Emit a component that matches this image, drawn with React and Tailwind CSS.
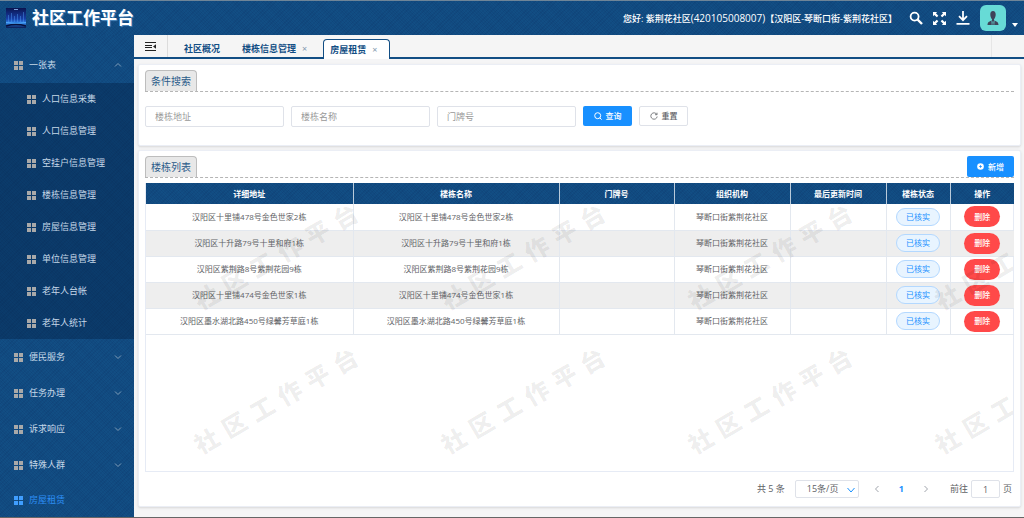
import { useState } from "react";

const openItems = [
  "人口信息采集",
  "人口信息管理",
  "空挂户信息管理",
  "楼栋信息管理",
  "房屋信息管理",
  "单位信息管理",
  "老年人台帐",
  "老年人统计",
];

const closedGroups = ["便民服务", "任务办理", "诉求响应", "特殊人群"];

const columns = [
  { title: "详细地址", width: "w-[207px]" },
  { title: "楼栋名称", width: "w-[206px]" },
  { title: "门牌号", width: "w-[115px]" },
  { title: "组织机构", width: "w-[116px]" },
  { title: "最后更新时间", width: "w-24" },
  { title: "楼栋状态", width: "w-16" },
  { title: "操作", width: "w-16" },
];

const rows = [
  "汉阳区十里铺478号金色世家2栋",
  "汉阳区十升路79号十里和府1栋",
  "汉阳区紫荆路8号紫荆花园9栋",
  "汉阳区十里铺474号金色世家1栋",
  "汉阳区墨水湖北路450号绿馨芳草庭1栋",
];

const weave =
  "bg-[repeating-linear-gradient(45deg,rgba(0,20,70,0.08)_0,rgba(0,20,70,0.08)_1px,transparent_1px,transparent_2px),repeating-linear-gradient(-45deg,rgba(0,20,70,0.08)_0,rgba(0,20,70,0.08)_1px,transparent_1px,transparent_3px)]";

function GridIcon({ className }) {
  return (
    <svg viewBox="0 0 9 9" className={`size-[9px] shrink-0 ${className}`} fill="currentColor">
      <path d="M0 0h4v4H0zM5 0h4v4H5zM0 5h4v4H0zM5 5h4v4H5z" />
    </svg>
  );
}

function Chevron({ className, d }) {
  return (
    <svg viewBox="0 0 8 8" className={className} fill="none" stroke="currentColor">
      <path d={d} />
    </svg>
  );
}

function Logo() {
  return (
    <svg viewBox="0 0 20 20" className="size-5 shrink-0">
      <defs>
        <linearGradient id="logo-sky" x1="0" y1="0" x2="0" y2="1">
          <stop offset="0" stopColor="#0b1450" />
          <stop offset="0.55" stopColor="#1740a8" />
          <stop offset="0.75" stopColor="#2f83e6" />
          <stop offset="1" stopColor="#0a1a52" />
        </linearGradient>
      </defs>
      <rect width="20" height="20" fill="url(#logo-sky)" />
      <path
        d="M2.500 7v7M5.500 5v9M8.500 8v6M11.500 6v8M14.500 8v6M17.500 4v10"
        stroke="#4f9cf5"
        strokeOpacity="0.45"
      />
      <path d="M8 1.500h4" stroke="#9cc4ff" strokeOpacity="0.8" />
      <path d="M0 14.500q10 2 20 0" stroke="#58b4ff" strokeOpacity="0.8" fill="none" />
      <path d="M0 18q10-3 20 0" stroke="#07103c" strokeWidth="1.500" fill="none" />
    </svg>
  );
}

function Header() {
  return (
    <header
      className={`flex h-[35px] shrink-0 items-center border-t border-[#6f8598] bg-[#124e84] px-1.5 text-white ${weave}`}
    >
      <Logo />
      <h1 className="ml-1.5 text-[17px] leading-5 font-bold [text-shadow:1px_1px_1px_rgba(120,180,230,0.6)]">
        社区工作平台
      </h1>
      <p className="ml-auto text-[9px] leading-4 font-medium">
        您好: 紫荆花社区<span className="text-[10px]">(420105008007)</span>【汉阳区-琴断口街-紫荆花社区】
      </p>
      <div className="ml-3 flex items-center gap-2">
        <button type="button" aria-label="搜索">
          <svg viewBox="0 0 14 14" className="size-3.5" fill="none" stroke="currentColor" strokeWidth="1.800">
            <circle cx="5.600" cy="5.600" r="4" />
            <path d="M8.500 8.500l4.500 4.500" strokeWidth="2.400" />
          </svg>
        </button>
        <button type="button" aria-label="全屏" className="px-0.5">
          <svg viewBox="0 0 13 13" className="size-[13px]" fill="currentColor">
            <path d="M0 0h4.200L2.900 1.300 5.300 3.800 3.800 5.300 1.300 2.900 0 4.200zM13 0v4.200l-1.300-1.300-2.500 2.400-1.500-1.500 2.400-2.500L8.800 0zM0 13V8.800l1.300 1.300 2.500-2.400 1.500 1.500-2.400 2.500L4.200 13zM13 13H8.800l1.300-1.300-2.400-2.500 1.500-1.500 2.500 2.400L13 8.800z" />
          </svg>
        </button>
        <button type="button" aria-label="下载">
          <svg viewBox="0 0 14 14" className="size-3.5" fill="none" stroke="currentColor" strokeWidth="1.800">
            <path d="M7 0v9M3 5.200l4 4 4-4M.5 12.800h13" />
          </svg>
        </button>
        <button type="button" aria-label="用户菜单" className="ml-0.5 flex items-end gap-1.5">
          <span className="grid size-[26px] place-items-center rounded-md bg-[#67dbd6]">
            <svg viewBox="0 0 14 16" className="h-4 w-3.5">
              <path
                d="M7 1c1.800 0 2.700 1.400 2.700 3.400S8.800 8.200 8 9.200v1.300c2 .8 4.500 1.200 4.500 4.500h-11c0-3.300 2.500-3.700 4.500-4.500V9.200C5.200 8.200 4.300 6.400 4.300 4.400S5.200 1 7 1z"
                fill="#3f4459"
              />
              <path d="M5.500 10.800L7 12l1.500-1.200L8.200 15H5.800z" fill="#67dbd6" />
              <path d="M6.600 11.800h.8l.4 3.200H6.200z" fill="#3f4459" />
            </svg>
          </span>
          <svg viewBox="0 0 6 4" className="mb-1 h-1 w-1.5" fill="currentColor">
            <path d="M0 0h6L3 4z" />
          </svg>
        </button>
      </div>
    </header>
  );
}

function Sidebar() {
  return (
    <nav className={`w-[134px] shrink-0 bg-[#124e84] pt-3 text-[9px] leading-4 text-[#c6d8e8] ${weave}`}>
      <button type="button" className="flex h-9 w-full items-center pr-3 pl-3.5">
        <GridIcon className="text-[#a9a9a9]" />
        <span className="ml-1.5">一张表</span>
        <Chevron className="ml-auto size-2 text-[#7f9db8]" d="M1 5.500l3-3 3 3" />
      </button>
      <ul className="bg-[#001a3c]/35">
        {openItems.map((item) => (
          <li key={item}>
            <a href="#" className="flex h-8 items-center pl-[27px]">
              <GridIcon className="text-[#a9a9a9]" />
              <span className="ml-1.5">{item}</span>
            </a>
          </li>
        ))}
      </ul>
      {closedGroups.map((group) => (
        <button key={group} type="button" className="flex h-9 w-full items-center pr-3 pl-3.5">
          <GridIcon className="text-[#a9a9a9]" />
          <span className="ml-1.5">{group}</span>
          <Chevron className="ml-auto size-2 text-[#7f9db8]" d="M1 2.500l3 3 3-3" />
        </button>
      ))}
      <a href="#" className="flex h-[34px] items-center pl-3.5 text-[#2d8ff5]">
        <GridIcon className="text-[#409eff]" />
        <span className="ml-1.5">房屋租赁</span>
      </a>
    </nav>
  );
}

function TabBar() {
  return (
    <div className="flex h-6 shrink-0 items-end border-b-2 border-[#124e84] bg-[#f5f5f5] text-[9px] leading-4 font-bold text-[#124e84]">
      <button
        type="button"
        aria-label="收起菜单"
        className="grid h-full w-[34px] place-items-center border-r border-[#dcdcdc]"
      >
        <svg viewBox="0 0 11 9" className="h-[9px] w-[11px] text-[#222]" fill="none" stroke="currentColor">
          <path d="M0 .5h11M0 3.500h7M0 5.500h7M0 8.500h11" />
          <path d="M11 2.300v4.400L8 4.500z" fill="currentColor" stroke="none" />
        </svg>
      </button>
      <button type="button" className="ml-4">
        社区概况
      </button>
      <button type="button" className="ml-[22px]">
        楼栋信息管理<span className="ml-1.5 font-normal text-[#8298ad]">×</span>
      </button>
      <button
        type="button"
        className="-mb-0.5 ml-4 h-5 rounded-t border border-b-0 border-[#124e84] bg-white px-1.5"
      >
        房屋租赁<span className="mx-1.5 font-normal text-[#8298ad]">×</span>
      </button>
      <span className="mr-8 ml-auto h-full border-l border-[#e6e6e6]" />
    </div>
  );
}

function SectionTitle({ children }) {
  return (
    <h2 className="rounded-t border border-b-0 border-[#bdbdbd] bg-[#e8e8e8] px-[5px] text-[10px] leading-5 text-[#2a5a88]">
      {children}
    </h2>
  );
}

function SearchPanel() {
  return (
    <section className="rounded-xs border border-[#ebeef5] bg-white px-1.5 pt-[5px] pb-[18px] shadow-sm">
      <div className="flex border-b border-dashed border-[#b5b5b5]">
        <SectionTitle>条件搜索</SectionTitle>
      </div>
      <form className="mt-3.5 flex gap-[7px]" onSubmit={(e) => e.preventDefault()}>
        {["楼栋地址", "楼栋名称", "门牌号"].map((label) => (
          <input
            key={label}
            type="text"
            aria-label={label}
            placeholder={label}
            className="h-[21px] w-[16%] rounded-xs border border-[#dfe2e9] px-[9px] text-[9px] placeholder:text-[#999]"
          />
        ))}
        <button
          type="submit"
          className="flex h-5 w-[49px] items-center justify-center gap-1 rounded-xs bg-[#1890ff] text-[8px] font-medium text-white"
        >
          <svg viewBox="0 0 8 8" className="size-2" fill="none" stroke="currentColor">
            <circle cx="3.700" cy="3.700" r="3" />
            <path d="M5.800 5.800l1.800 1.800" />
          </svg>
          查询
        </button>
        <button
          type="reset"
          className="flex h-5 w-[49px] items-center justify-center gap-1 rounded-xs border border-[#dfe2e9] bg-white text-[8px] font-medium text-[#606266]"
        >
          <svg viewBox="0 0 8 8" className="size-2" fill="none" stroke="currentColor" strokeWidth="0.800">
            <path d="M6.800 2.400A3.200 3.200 0 1 0 7.200 4.500M7 .7v2H5" />
          </svg>
          重置
        </button>
      </form>
    </section>
  );
}

function Watermark() {
  return (
    <div
      aria-hidden="true"
      className="pointer-events-none absolute inset-x-0 top-5 bottom-0 grid grid-cols-[repeat(4,247px)] content-start overflow-hidden"
    >
      {Array.from({ length: 8 }, (_, i) => (
        <div key={i} className="grid h-36 place-items-center pb-9 pl-3">
          <span className="flex -rotate-30 gap-2 text-2xl font-black text-black/8">
            {[..."社区工作平台"].map((char) => (
              <span key={char}>{char}</span>
            ))}
          </span>
        </div>
      ))}
    </div>
  );
}

function BuildingTable() {
  return (
    <div className="relative min-h-[280px] flex-1 border border-t-0 border-[#e6ebf5]">
      <table className="w-full table-fixed border-collapse text-center text-[8px] leading-4 text-[#606266]">
        <thead className={`bg-[#124e84] text-white ${weave}`}>
          <tr className="h-[21px]">
            {columns.map((col) => (
              <th key={col.title} className={`border-r border-[#b9cada] font-bold last:border-r-0 ${col.width}`}>
                {col.title}
              </th>
            ))}
          </tr>
        </thead>
        <tbody>
          {rows.map((address) => (
            <tr
              key={address}
              className="h-[26px] border-b border-[#e3e8ef] even:bg-[#eee] [&>td]:border-r [&>td]:border-[#e3e8ef] [&>td]:last:border-r-0"
            >
              <td>{address}</td>
              <td>{address}</td>
              <td />
              <td>琴断口街紫荆花社区</td>
              <td />
              <td>
                <span className="mx-auto block h-[18px] w-11 rounded-full border border-[#b3d8ff] bg-[#e8f4ff] text-[#1890ff]">
                  已核实
                </span>
              </td>
              <td>
                <button
                  type="button"
                  className="mx-auto block h-[21px] w-9 rounded-full bg-[#ff4949] font-medium text-white"
                >
                  删除
                </button>
              </td>
            </tr>
          ))}
        </tbody>
      </table>
      <Watermark />
    </div>
  );
}

function Pagination() {
  const [page, setPage] = useState("1");

  return (
    <div className="flex h-[18px] items-center justify-end text-[9px] leading-4 text-[#606266]">
      <span>共 5 条</span>
      <div className="relative ml-2.5">
        <select
          aria-label="每页条数"
          className="h-[18px] w-16 appearance-none rounded-xs border border-[#dfe2e9] bg-white pl-[11px]"
        >
          <option>15条/页</option>
        </select>
        <Chevron className="pointer-events-none absolute top-1.5 right-1 size-2 text-[#1890ff]" d="M.5 2l3.500 4 3.500-4" />
      </div>
      <button type="button" aria-label="上一页" className="ml-3.5">
        <Chevron className="size-2 text-[#a0a4ac]" d="M5.500 1l-3 3 3 3" />
      </button>
      <button type="button" className="ml-[18px] font-bold text-[#1890ff]">
        1
      </button>
      <button type="button" aria-label="下一页" className="ml-[18px]">
        <Chevron className="size-2 text-[#a0a4ac]" d="M2.500 1l3 3-3 3" />
      </button>
      <label className="ml-5 flex items-center gap-[3px] pr-0.5">
        前往
        <input
          type="text"
          value={page}
          onChange={(e) => setPage(e.target.value)}
          className="h-[18px] w-[29px] rounded-xs border border-[#dfe2e9] text-center"
        />
        页
      </label>
    </div>
  );
}

function ListPanel() {
  return (
    <section className="flex flex-1 flex-col rounded-xs border border-[#ebeef5] bg-white px-1.5 pt-[5px] pb-1.5 shadow-sm">
      <div className="mb-[5px] flex items-end border-b border-dashed border-[#b5b5b5]">
        <SectionTitle>楼栋列表</SectionTitle>
        <button
          type="button"
          className="ml-auto flex h-[21px] w-[47px] items-center justify-center gap-1 rounded-xs bg-[#1890ff] text-[8px] font-medium text-white"
        >
          <svg viewBox="0 0 8 8" className="size-[7px]">
            <circle cx="4" cy="4" r="3.800" fill="#fff" />
            <path d="M4 2.500v3M2.500 4h3" stroke="#1890ff" />
          </svg>
          新增
        </button>
      </div>
      <BuildingTable />
      <div className="pt-2 pb-0.5">
        <Pagination />
      </div>
    </section>
  );
}

export default function App() {
  return (
    <div className="flex min-h-dvh flex-col border-b border-[#666] bg-white font-['Open_Sans','Noto_Sans_CJK_SC',sans-serif]">
      <Header />
      <div className="flex flex-1">
        <Sidebar />
        <main className="flex min-w-0 flex-1 flex-col">
          <TabBar />
          <div className="flex flex-1 flex-col gap-1 bg-[#f5f5f6] pt-[5px] pr-[3px] pb-2.5 pl-1">
            <SearchPanel />
            <ListPanel />
          </div>
        </main>
      </div>
    </div>
  );
}
